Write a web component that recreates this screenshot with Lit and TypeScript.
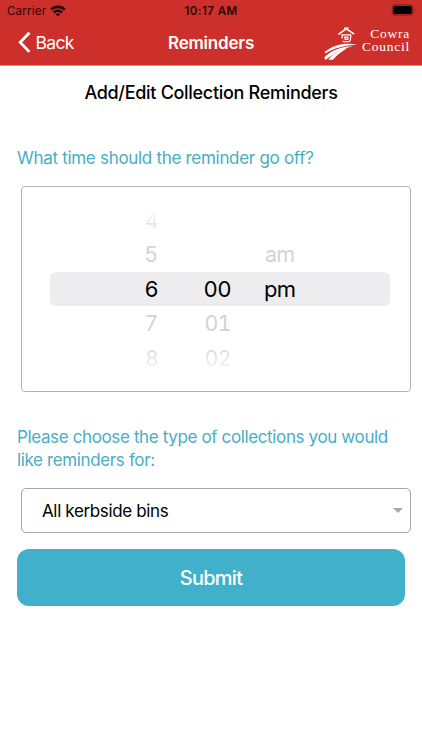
import { LitElement, html, css, svg } from "lit";
import { customElement } from "lit/decorators.js";

const wifi = svg`
  <path d="M0.2 4.3 A10.4 10.4 0 0 1 14.8 4.3 L13 6.1 A7.9 7.9 0 0 0 2 6.1 Z"/>
  <path d="M2.8 6.9 A6.7 6.7 0 0 1 12.2 6.9 L10.4 8.7 A4.1 4.1 0 0 0 4.6 8.7 Z"/>
  <path d="M5.4 9.5 A3 3 0 0 1 9.6 9.5 L7.5 11.7 Z"/>`;

@customElement("status-bar")
class StatusBar extends LitElement {
  static styles = css`
    :host { display: grid; grid-template-columns: 1fr auto 1fr; align-items: center; height: 22px; padding: 0 6px 0 7px; color: #2a0605; font-size: 11.5px; line-height: 14px; }
    .left { display: flex; align-items: center; gap: 4px; }
    .carrier { letter-spacing: 0.22px; }
    .wifi { width: 16px; height: 13px; fill: #2a0605; margin-top: -2px; }
    .time { font-weight: 600; font-size: 11.5px; letter-spacing: 0.45px; margin-left: -1px; }
    .battery { justify-self: end; width: 26px; height: 12px; margin-top: -2px; }
  `;
  render() {
    return html`
      <div class="left"><span class="carrier">Carrier</span><svg class="wifi" viewBox="0 0 15 12">${wifi}</svg></div>
      <span class="time">10:17 AM</span>
      <svg class="battery" viewBox="0 0 26 12">
        <rect x="2.3" y="0.9" width="20.6" height="10.2" rx="2.8" fill="none" stroke="#7d1916"/>
        <rect x="3.4" y="2" width="18.4" height="8" rx="1.6" fill="#000"/>
        <path d="M24 4.2 Q25.6 6 24 7.8Z" fill="#7d1916"/>
      </svg>`;
  }
}

@customElement("nav-header")
class NavHeader extends LitElement {
  static styles = css`
    :host { display: grid; grid-template-columns: 1fr auto 1fr; align-items: center; height: 43px; padding: 0 13px 0 18px; color: #fff; }
    .back { display: flex; align-items: center; gap: 4.5px; font-size: 17.5px; letter-spacing: -0.65px; margin-top: -2px; }
    .chevron { width: 13px; height: 23px; fill: none; stroke: #fff; stroke-width: 2.8; }
    .title { font-size: 17px; font-weight: 600; letter-spacing: -0.2px; margin: -1px 0 0 -5px; }
    .brand { justify-self: end; display: flex; align-items: center; gap: 5px; }
    .mark { width: 33px; height: 36px; fill: none; stroke: #fff; margin-top: -1px; }
    .solid { fill: #fff; stroke: none; }
    .name { font-family: "Liberation Serif", serif; font-size: 13.5px; line-height: 13.5px; letter-spacing: 0.75px; text-align: right; margin: -7px -1px 0 0; }
  `;
  render() {
    return html`
      <div class="back">
        <svg class="chevron" viewBox="0 0 13 23"><path d="M11.4 1.8 L2.2 11.3 L11.4 20.9"/></svg><span>Back</span>
      </div>
      <span class="title">Reminders</span>
      <div class="brand">
        <svg class="mark" viewBox="0 0 33 36">
          <path stroke-width="1.6" d="M14.4 9.4 L22.2 3.8 L30.2 9.1 M20.2 3.2 L24.6 3"/>
          <path stroke-width="1.2" d="M17.4 9.9 H27.4 M18.2 10.2 V13.4 M26.6 10.2 C26.8 13.6 26.4 15.5 25.6 16.3 C23.5 16.8 20.6 16.9 18.5 16.4 M20.8 12.2 H23.9 V14.4 H21.2 Z"/>
          <path class="solid" d="M0.8 26.8 C10 19.6 21 17.4 33 19.5 C21 20.3 11 22.8 1.2 28.5Z"/>
          <path class="solid" d="M0.2 32.3 C7 25.3 18 21.1 29 21.2 C18.5 24 9.5 28 1.5 35.1Z"/>
          <path class="solid" d="M4.4 34.8 C9 28.5 16 24.6 23.2 23.3 C17 26.8 12.2 30.8 9 34.8Z"/>
        </svg>
        <div class="name">Cowra<br>Council</div>
      </div>`;
  }
}

@customElement("time-picker")
class TimePicker extends LitElement {
  static styles = css`
    :host { display: grid; align-content: center; box-sizing: border-box; height: 206px; padding: 0 20px 0 28px; border: 1.5px solid #b2b3b6; border-radius: 4px; }
    .row { display: grid; grid-template-columns: 108.5px 73px 1fr; align-items: center; height: 34.5px; font-size: 22px; line-height: 34px; }
    .row span { white-space: nowrap; }
    .hour, .minute { text-align: right; }
    .half { padding-left: 32.5px; letter-spacing: -0.7px; }
    .near { color: #d3d3d4; font-size: 21.5px; line-height: 33px; }
    .near .hour, .near .minute { padding-right: 1px; }
    .near .half { padding-left: 33.5px; }
    .near .minute { font-variant-numeric: tabular-nums; letter-spacing: -1px; }
    .far { color: #e9e9ea; font-size: 21px; line-height: 35px; }
    .far .minute { padding-right: 0.5px; }
    .upper .hour { color: transparent; background: linear-gradient(#fff 20%, #dededf 75%); background-clip: text; -webkit-background-clip: text; }
    .lower span { color: transparent; background: linear-gradient(#d9d9da 20%, #f3f3f3 78%); background-clip: text; -webkit-background-clip: text; }
    .selected { color: #000; background: #ededef; border-radius: 6px; }
  `;
  rows = [
    ["far upper", "4", "", ""],
    ["near", "5", "", "am"],
    ["selected", "6", "00", "pm"],
    ["near", "7", "01", ""],
    ["far lower", "8", "02", ""],
  ];
  render() {
    return this.rows.map(([kind, hour, minute, half]) => html`
      <div class="row ${kind}"><span class="hour">${hour}</span><span class="minute">${minute}</span><span class="half">${half}</span></div>`);
  }
}

@customElement("app-root")
class AppRoot extends LitElement {
  static styles = css`
    :host { display: block; height: 750px; background: #fff; font-family: Inter, "Liberation Sans", sans-serif; overflow: hidden; }
    header { background: #cd2f2b; border-bottom: 1px solid #e88884; }
    main { display: flex; flex-direction: column; padding: 15px 11px 0 17px; }
    h1 { margin: 0 0 0 -6px; text-align: center; font-size: 18px; font-weight: 500; line-height: 24px; letter-spacing: -0.3px; }
    .label { color: #48aec4; font-size: 17px; line-height: 23px; white-space: nowrap; }
    .when { margin-top: 42px; letter-spacing: -0.3px; }
    time-picker { margin: 16px 0 0 4px; }
    .which { margin-top: 34px; letter-spacing: -0.37px; }
    .select { display: flex; justify-content: space-between; align-items: center; box-sizing: border-box; height: 45px; margin: 16px 0 0 4px; padding: 0 7px 0 20px; border: 1.3px solid #a5a6a9; border-radius: 5px; font-size: 17px; letter-spacing: -0.36px; }
    .arrow { width: 10px; height: 5px; background: #aaa; clip-path: polygon(0 0, 100% 0, 50% 100%); }
    .submit { height: 57px; margin: 16px 6px 0 0; border: 0; border-radius: 12px; background: #41b0ca; color: #fff; font: 450 20px/57px Inter, sans-serif; letter-spacing: -0.75px; padding: 1px 0 0; }
  `;
  render() {
    return html`
      <header><status-bar></status-bar><nav-header></nav-header></header>
      <main>
        <h1>Add/Edit Collection Reminders</h1>
        <div class="label when">What time should the reminder go off?</div>
        <time-picker></time-picker>
        <div class="label which">Please choose the type of collections you would<br>like reminders for:</div>
        <div class="select"><span>All kerbside bins</span><span class="arrow"></span></div>
        <button class="submit">Submit</button>
      </main>`;
  }
}
